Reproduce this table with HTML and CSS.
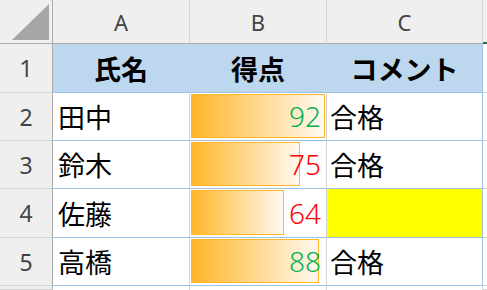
FILE: index.html
```html
<!DOCTYPE html>
<html lang="ja">
<head>
<meta charset="utf-8">
<title>Sheet</title>
<link rel="stylesheet" href="styles.css">
</head>
<body>
<div class="sheet">
  <div class="corner"><svg class="tri" width="52" height="43" viewBox="0 0 52 43"><polygon points="12,40 49,40 49,4" fill="#A6A6A6"/></svg></div>
  <div class="colhead">A</div>
  <div class="colhead">B</div>
  <div class="colhead">C</div>
  <div class="colhead sel"></div>

  <div class="rowhead">1</div>
  <div class="cell th">氏名</div>
  <div class="cell th">得点</div>
  <div class="cell th last">コメント</div>
  <div class="cell out"></div>

  <div class="rowhead">2</div>
  <div class="cell name">田中</div>
  <div class="cell score"><div class="bar" style="width:134px"></div><span class="num pass">92</span></div>
  <div class="cell comment last">合格</div>
  <div class="cell out"></div>

  <div class="rowhead">3</div>
  <div class="cell name">鈴木</div>
  <div class="cell score"><div class="bar" style="width:109px"></div><span class="num fail">75</span></div>
  <div class="cell comment last">合格</div>
  <div class="cell out"></div>

  <div class="rowhead">4</div>
  <div class="cell name">佐藤</div>
  <div class="cell score"><div class="bar" style="width:93px"></div><span class="num fail">64</span></div>
  <div class="cell comment last warn"></div>
  <div class="cell out"></div>

  <div class="rowhead">5</div>
  <div class="cell name">高橋</div>
  <div class="cell score"><div class="bar" style="width:128px"></div><span class="num pass">88</span></div>
  <div class="cell comment last">合格</div>
  <div class="cell out"></div>

  <div class="rowhead"></div>
  <div class="cell blank"></div>
  <div class="cell blank"></div>
  <div class="cell blank"></div>
  <div class="cell out"></div>
</div>
</body>
</html>
```

FILE: styles.css
```css
html, body {
  margin: 0;
  padding: 0;
  background: #ffffff;
  overflow: hidden;
}

.sheet {
  width: 487px;
  height: 290px;
  display: grid;
  grid-template-columns: 53px 137px 137px 156px 1fr;
  grid-template-rows: 44px 49px 48px 48px 49px 48px 1fr;
  font-family: "Noto Sans CJK JP", "Noto Sans", sans-serif;
  color: #000;
}

.sheet > div {
  box-sizing: border-box;
  min-width: 0;
  overflow: hidden;
}

.corner {
  background: #EFEFEF;
  border-right: 1px solid #ABABAB;
  border-bottom: 1px solid #ABABAB;
}

.tri {
  display: block;
}

.colhead {
  background: #EFEFEF;
  border-right: 1px solid #D4D4D4;
  border-bottom: 1px solid #ABABAB;
  display: flex;
  align-items: center;
  justify-content: center;
  font-family: "Noto Sans", sans-serif;
  font-size: 22px;
  color: #444;
}

.colhead.sel {
  border-right: none;
  border-bottom: 2px solid #217346;
}

.rowhead {
  background: #EFEFEF;
  border-right: 1px solid #ABABAB;
  border-bottom: 1px solid #D4D4D4;
  display: flex;
  align-items: center;
  justify-content: center;
  font-family: "Noto Sans", sans-serif;
  font-size: 23px;
  color: #444;
}

.cell {
  border-right: 1px solid #D4D4D4;
  border-bottom: 1px solid #9BC2E6;
  display: flex;
  align-items: center;
  font-size: 27px;
  line-height: 1;
}

.cell.last {
  border-right-color: #9BC2E6;
}

.th {
  background: #BDD7EE;
  border-right-color: #BDD7EE;
  justify-content: center;
  font-weight: 700;
}

.th.last {
  border-right-color: #9BC2E6;
}

.name {
  padding-left: 5px;
}

.comment {
  padding-left: 3px;
}

.warn {
  background: #FFFF00;
}

.score {
  display: grid;
  align-items: stretch;
  padding: 1px 0 2px 1px;
}

.bar {
  grid-area: 1 / 1;
  box-sizing: border-box;
  height: 100%;
  border: 1px solid #FFB628;
  background: linear-gradient(to right, #FFB628, #FFF4E2 92%, #FFF8EE);
}

.num {
  grid-area: 1 / 1;
  align-self: center;
  justify-self: end;
  padding-right: 5px;
  font-family: "Noto Sans", sans-serif;
  font-size: 28px;
  font-weight: 300;
}

.pass { color: #00B050; }
.fail { color: #FF0000; }

.out {
  border-right: none;
  border-bottom: 1px solid #D4D4D4;
  background: #fff;
}

.blank {
  border-bottom: none;
}
```
